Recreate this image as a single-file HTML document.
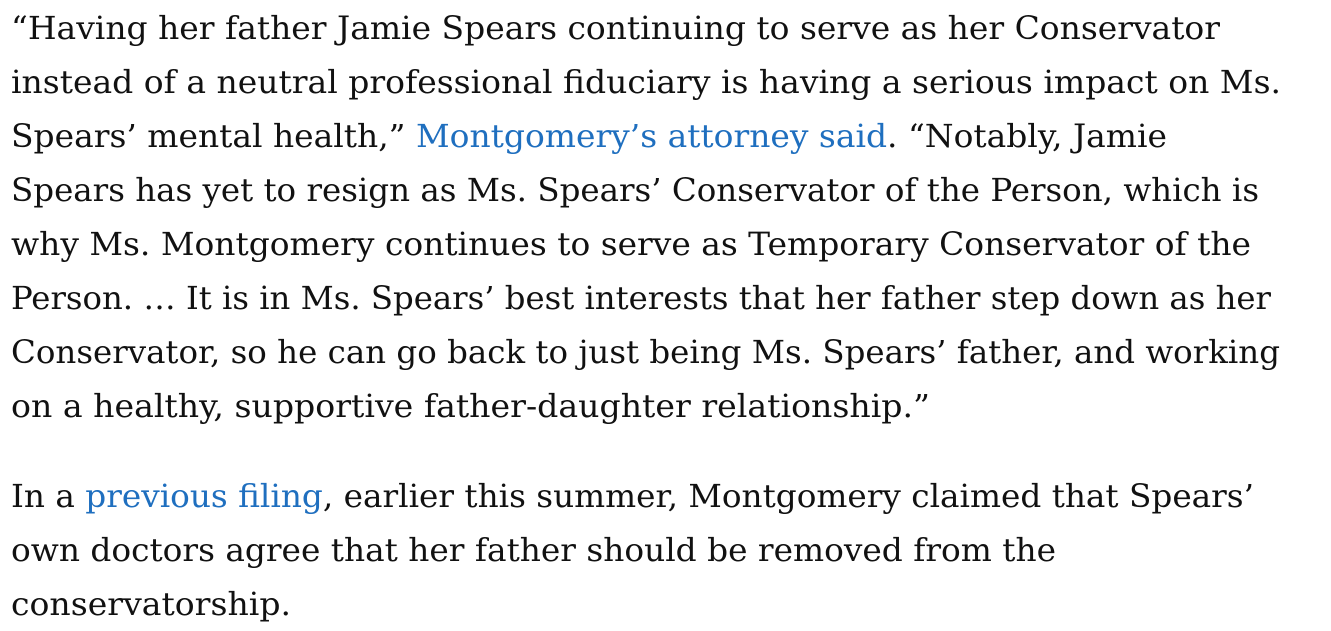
<!DOCTYPE html>
<html><head><meta charset="utf-8"><style>
html,body{margin:0;padding:0;background:#fff;width:1331px;height:631px;overflow:hidden}
svg text{font-family:"DejaVu Serif","Liberation Serif",serif;font-size:32px;fill:#111}
.l{fill:#1f6fbf}
</style></head><body>
<svg width="1331" height="631" xmlns="http://www.w3.org/2000/svg">
<text x="11" y="39" textLength="1209" lengthAdjust="spacingAndGlyphs">“Having her father Jamie Spears continuing to serve as her Conservator</text>
<text x="11" y="93" textLength="1270" lengthAdjust="spacingAndGlyphs">instead of a neutral professional fiduciary is having a serious impact on Ms.</text>
<text x="11" y="147" textLength="1156" lengthAdjust="spacingAndGlyphs">Spears’ mental health,” <tspan class="l">Montgomery’s attorney said</tspan>. “Notably, Jamie</text>
<text x="11" y="201" textLength="1248" lengthAdjust="spacingAndGlyphs">Spears has yet to resign as Ms. Spears’ Conservator of the Person, which is</text>
<text x="11" y="255" textLength="1240" lengthAdjust="spacingAndGlyphs">why Ms. Montgomery continues to serve as Temporary Conservator of the</text>
<text x="11" y="309" textLength="1260" lengthAdjust="spacingAndGlyphs">Person. … It is in Ms. Spears’ best interests that her father step down as her</text>
<text x="11" y="363" textLength="1269" lengthAdjust="spacingAndGlyphs">Conservator, so he can go back to just being Ms. Spears’ father, and working</text>
<text x="11" y="417" textLength="919" lengthAdjust="spacingAndGlyphs">on a healthy, supportive father-daughter relationship.”</text>
<text x="11" y="507" textLength="1243" lengthAdjust="spacingAndGlyphs">In a <tspan class="l">previous filing</tspan>, earlier this summer, Montgomery claimed that Spears’</text>
<text x="11" y="561" textLength="1045" lengthAdjust="spacingAndGlyphs">own doctors agree that her father should be removed from the</text>
<text x="11" y="615" textLength="280" lengthAdjust="spacingAndGlyphs">conservatorship.</text>
</svg>
</body></html>
